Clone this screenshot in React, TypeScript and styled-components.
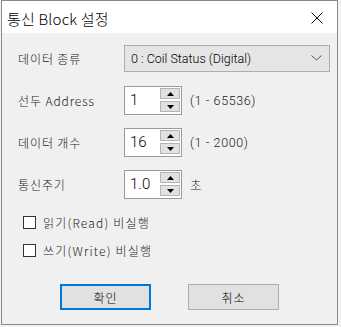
import React from "react";
import styled, { createGlobalStyle } from "styled-components";

const Global = createGlobalStyle`
  html, body { margin: 0; padding: 0; background: #f3f3f3; }
  body { font-family: "Noto Sans CJK KR", "Noto Sans", sans-serif; }
`;

const Window = styled.div`
  box-sizing: border-box;
  margin-left: 1px;
  width: 337px;
  height: 325px;
  border: 1px solid #8a8a8a;
  background: #f0f0f0;
  display: flex;
  flex-direction: column;
`;

const TitleBar = styled.div`
  height: 32px;
  background: #fff;
  display: flex;
  align-items: center;
  justify-content: space-between;
  padding-left: 5px;
  padding-right: 14px;
  padding-top: 2px;
  box-sizing: border-box;
  flex-shrink: 0;
`;

const Title = styled.span`
  font-size: 15px;
  font-weight: 300;
  color: #000;
  letter-spacing: 0.2px;
`;

const Body = styled.div`
  padding: 11px 6px 0 16px;
  display: flex;
  flex-direction: column;
`;

const Row = styled.div<{ $mt?: number }>`
  display: flex;
  align-items: center;
  height: 28px;
  margin-top: ${(p) => p.$mt ?? 14}px;
`;

const Label = styled.span`
  width: 106px;
  font-size: 12px;
  font-weight: 300;
  color: #1a1a1a;
  letter-spacing: 0.9px;
`;

const Combo = styled.div`
  box-sizing: border-box;
  width: 206px;
  height: 27px;
  background: #e5e5e5;
  border: 1px solid #adadad;
  display: flex;
  align-items: center;
  justify-content: space-between;
  padding: 0 7px 0 6px;
  font-family: Roboto, "Noto Sans CJK KR", sans-serif;
  font-size: 12.5px;
  font-weight: 300;
  color: #000;
`;

const Spin = styled.div`
  box-sizing: border-box;
  width: 58px;
  height: 29px;
  background: #fff;
  border: 1px solid #9a9a9a;
  display: flex;
  align-items: center;
  justify-content: space-between;
  padding: 1px 1px 1px 5px;
`;

const SpinValue = styled.span`
  font-family: Roboto, "Noto Sans CJK KR", sans-serif;
  font-size: 15px;
  font-weight: 300;
  color: #000;
`;

const SpinButtons = styled.div`
  display: flex;
  flex-direction: column;
  gap: 2px;
  align-self: center;
`;

const SpinBtn = styled.div`
  box-sizing: border-box;
  width: 20px;
  height: 11px;
  background: #e1e1e1;
  border: 1px solid #b5b5b5;
  display: flex;
  align-items: center;
  justify-content: center;
`;

const Hint = styled.span`
  margin-left: 8px;
  font-family: Roboto, "Noto Sans CJK KR", sans-serif;
  font-size: 12.5px;
  font-weight: 300;
  color: #1a1a1a;
  letter-spacing: 0.6px;
`;

const CheckRow = styled.label<{ $mt: number }>`
  display: flex;
  align-items: center;
  height: 20px;
  margin-top: ${(p) => p.$mt}px;
  margin-left: 5px;
  font-size: 12px;
  font-weight: 300;
  color: #1a1a1a;
  letter-spacing: 1.2px;
`;

const Box = styled.span`
  box-sizing: border-box;
  width: 13px;
  height: 13px;
  border: 1px solid #333;
  background: #fff;
  margin-right: 7px;
`;

const Buttons = styled.div`
  display: flex;
  margin-top: 24px;
  margin-left: 42px;
  gap: 37px;
`;

const Button = styled.div<{ $primary?: boolean }>`
  box-sizing: border-box;
  width: 91px;
  height: 26px;
  background: #e1e1e1;
  border: ${(p) => (p.$primary ? "2px solid #0078d7" : "1px solid #adadad")};
  display: flex;
  align-items: center;
  justify-content: center;
  font-size: 12px;
  font-weight: 300;
  letter-spacing: 1px;
  color: #000;
`;

const Tri = ({ up }: { up?: boolean }) => (
  <svg width="7" height="4" viewBox="0 0 7 4">
    <polygon points={up ? "0,4 7,4 3.5,0" : "0,0 7,0 3.5,4"} fill="#000" />
  </svg>
);

const SpinBox = ({ value }: { value: string }) => (
  <Spin>
    <SpinValue>{value}</SpinValue>
    <SpinButtons>
      <SpinBtn>
        <Tri up />
      </SpinBtn>
      <SpinBtn>
        <Tri />
      </SpinBtn>
    </SpinButtons>
  </Spin>
);

export default function App() {
  return (
    <>
      <Global />
      <Window>
        <TitleBar>
          <Title>통신 Block 설정</Title>
          <svg width="12" height="12" viewBox="0 0 12 12">
            <path d="M0.5 0.5 L11.5 11.5 M11.5 0.5 L0.5 11.5" stroke="#111" strokeWidth="1" />
          </svg>
        </TitleBar>
        <Body>
          <Row $mt={0}>
            <Label>데이터 종류</Label>
            <Combo>
              <span>0 : Coil Status (Digital)</span>
              <svg width="11" height="6" viewBox="0 0 11 6">
                <path d="M0.5 0.5 L5.5 5 L10.5 0.5" stroke="#555" strokeWidth="1" fill="none" />
              </svg>
            </Combo>
          </Row>
          <Row>
            <Label>선두 Address</Label>
            <SpinBox value="1" />
            <Hint>(1 - 65536)</Hint>
          </Row>
          <Row>
            <Label>데이터 개수</Label>
            <SpinBox value="16" />
            <Hint>(1 - 2000)</Hint>
          </Row>
          <Row>
            <Label>통신주기</Label>
            <SpinBox value="1.0" />
            <Hint>초</Hint>
          </Row>
          <CheckRow $mt={14}>
            <Box />
            읽기(Read) 비실행
          </CheckRow>
          <CheckRow $mt={8}>
            <Box />
            쓰기(Write) 비실행
          </CheckRow>
          <Buttons>
            <Button $primary>확인</Button>
            <Button>취소</Button>
          </Buttons>
        </Body>
      </Window>
    </>
  );
}
